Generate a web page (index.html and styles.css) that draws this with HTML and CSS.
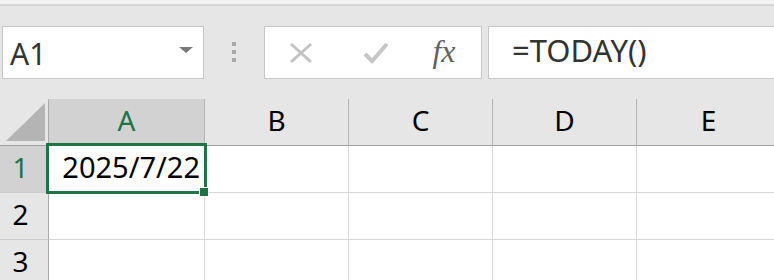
FILE: index.html
```html
<!DOCTYPE html>
<html lang="ja">
<head>
    <meta charset="UTF-8">
    <meta name="viewport" content="width=device-width, initial-scale=1.0">
    <title>Excel - TODAY</title>
    <link rel="stylesheet" href="styles.css">
</head>
<body>
    <div class="ribbon-edge"></div>

    <div class="formula-row">
        <div class="name-box">
            <span class="name-text">A1</span>
            <span class="caret"></span>
        </div>
        <div class="grip"><i></i><i></i><i></i></div>
        <div class="fx-buttons">
            <span class="fx-slot">
                <svg width="24" height="22" viewBox="0 0 24 22">
                    <path d="M2 2 L22 20 M2 20 L22 2" stroke="#c2c2c2" stroke-width="3" fill="none"/>
                </svg>
            </span>
            <span class="fx-slot check">
                <svg width="26" height="22" viewBox="0 0 26 22">
                    <path d="M2 12 L9 19 L24 2" stroke="#c6c6c6" stroke-width="4" fill="none"/>
                </svg>
            </span>
            <span class="fx-slot fx-label">fx</span>
        </div>
        <div class="formula-input">=TODAY()</div>
    </div>

    <div class="sheet">
        <div class="corner"><span class="corner-tri"></span></div>
        <div class="col-head selected">A</div>
        <div class="col-head">B</div>
        <div class="col-head">C</div>
        <div class="col-head">D</div>
        <div class="col-head">E</div>

        <div class="row-head selected">1</div>
        <div class="cell active">
            2025/7/22
            <span class="selection"></span>
            <span class="fill-handle"></span>
        </div>
        <div class="cell"></div>
        <div class="cell"></div>
        <div class="cell"></div>
        <div class="cell"></div>

        <div class="row-head">2</div>
        <div class="cell"></div>
        <div class="cell"></div>
        <div class="cell"></div>
        <div class="cell"></div>
        <div class="cell"></div>

        <div class="row-head">3</div>
        <div class="cell"></div>
        <div class="cell"></div>
        <div class="cell"></div>
        <div class="cell"></div>
        <div class="cell"></div>
    </div>
</body>
</html>
```

FILE: styles.css
```css
body {
    margin: 0;
    background-color: #e6e6e6;
    font-family: "Noto Sans", "Noto Sans CJK JP", sans-serif;
    overflow: hidden;
    width: 774px;
    height: 280px;
}
.ribbon-edge {
    height: 4px;
    background-color: #f3f3f3;
    border-bottom: 2px solid #d6d6d6;
}
.formula-row {
    display: flex;
    align-items: center;
    padding: 20px 0;
    height: 53px;
}
.name-box {
    box-sizing: border-box;
    width: 202px;
    height: 53px;
    margin-left: 2px;
    background-color: #fff;
    border: 1px solid #c6c6c6;
    display: flex;
    align-items: flex-start;
    justify-content: space-between;
    padding: 0 10px 0 7px;
}
.name-text {
    font-size: 30px;
    line-height: 49px;
    padding-top: 2px;
    color: #333;
}
.caret {
    width: 0;
    height: 0;
    margin-top: 20px;
    border-left: 7px solid transparent;
    border-right: 7px solid transparent;
    border-top: 6px solid #7a7a7a;
}
.grip {
    display: flex;
    flex-direction: column;
    gap: 4px;
    margin-left: 28px;
    margin-top: -1px;
}
.grip i {
    display: block;
    width: 4px;
    height: 4px;
    background-color: #a8a8a8;
}
.fx-buttons {
    box-sizing: border-box;
    width: 218px;
    height: 53px;
    margin-left: 28px;
    background-color: #fff;
    border: 1px solid #c6c6c6;
    display: grid;
    grid-template-columns: 72px 72px 72px;
    align-items: center;
    justify-items: center;
}
.fx-slot svg {
    display: block;
}
.check {
    margin-left: 5px;
}
.fx-label {
    font-family: "Liberation Serif", serif;
    font-style: italic;
    font-size: 32px;
    line-height: 51px;
    color: #626262;
    margin-top: -2px;
    margin-left: -2px;
}
.formula-input {
    box-sizing: border-box;
    flex: 1;
    height: 53px;
    margin-left: 6px;
    margin-right: -2px;
    background-color: #fff;
    border: 1px solid #c6c6c6;
    padding-left: 23px;
    font-size: 31px;
    line-height: 46px;
    color: #333;
}
.sheet {
    display: grid;
    grid-template-columns: 49px 156px 144px 144px 144px 144px;
    grid-template-rows: 47px 47px 47px 47px;
}
.corner {
    border-right: 1px solid #a9a9a9;
    border-bottom: 1px solid #a0a0a0;
    position: relative;
}
.corner-tri {
    position: absolute;
    left: 6px;
    top: 4px;
    width: 0;
    height: 0;
    border-left: 39px solid transparent;
    border-bottom: 38px solid #b4b4b4;
}
.col-head {
    border-right: 1px solid #b4b4b4;
    border-bottom: 1px solid #a0a0a0;
    text-align: center;
    font-size: 28px;
    line-height: 42px;
    color: #000;
}
.row-head {
    border-right: 1px solid #a9a9a9;
    border-bottom: 1px solid #cdcdcd;
    text-align: center;
    padding-right: 7px;
    font-size: 28px;
    line-height: 42px;
    color: #000;
}
.col-head.selected,
.row-head.selected {
    background-color: #d2d2d2;
    color: #217346;
}
.cell {
    background-color: #fff;
    border-right: 1px solid #d4d4d4;
    border-bottom: 1px solid #d4d4d4;
    font-size: 29px;
    line-height: 42px;
    text-align: right;
    padding-right: 4px;
    color: #000;
    white-space: nowrap;
}
.cell.active {
    position: relative;
}
.selection {
    position: absolute;
    left: -3px;
    top: -3px;
    width: 161px;
    height: 51px;
    box-sizing: border-box;
    border: 3px solid #217346;
}
.fill-handle {
    position: absolute;
    left: 150px;
    top: 41px;
    width: 8px;
    height: 8px;
    background-color: #217346;
    border: 1px solid #fff;
}
```
